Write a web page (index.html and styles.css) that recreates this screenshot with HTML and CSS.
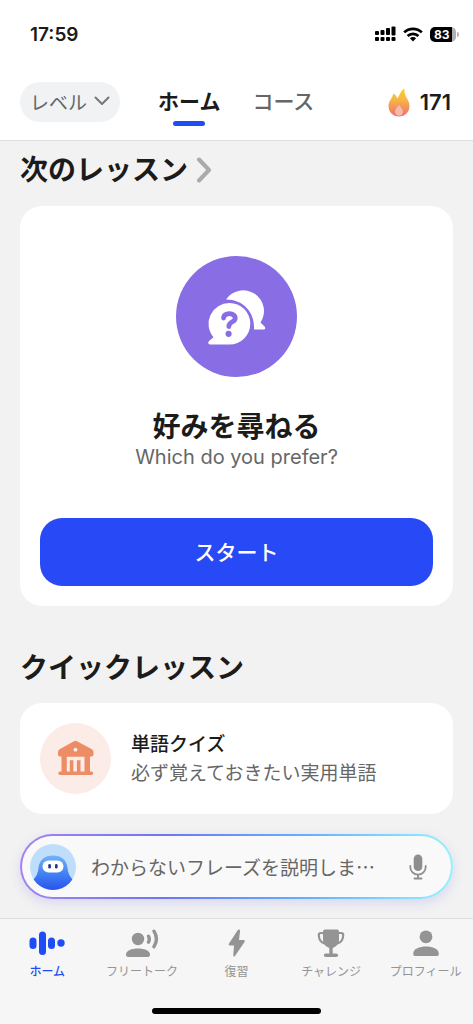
FILE: index.html
```html
<!DOCTYPE html>
<html lang="ja">
<head>
<meta charset="utf-8">
<meta name="viewport" content="width=device-width, initial-scale=1">
<title>ホーム</title>
<link rel="stylesheet" href="styles.css">
</head>
<body>
<div class="app">
  <header class="header">
    <div class="status">
      <span class="time">17:59</span>
      <div class="status-icons">
        <svg width="21" height="16" viewBox="0 0 21 16" aria-hidden="true">
          <g fill="#000">
            <rect x="0" y="5" width="4" height="4" rx="1"/><rect x="5.5" y="4" width="4" height="5" rx="1"/><rect x="11" y="2" width="4" height="7" rx="1"/><rect x="16.5" y="0.5" width="4" height="9" rx="1"/>
            <rect x="0" y="11" width="4" height="4" rx="1"/><rect x="5.5" y="11" width="4" height="4" rx="1"/><rect x="11" y="11" width="4" height="4" rx="1"/><rect x="16.5" y="11" width="4" height="4" rx="1"/>
          </g>
        </svg>
        <svg width="20" height="15" viewBox="0 0 20 15" aria-hidden="true">
          <g fill="none" stroke="#000" stroke-width="2.7">
            <path d="M1.2 5.4a12.5 12.5 0 0 1 17.6 0"/><path d="M4.6 9a7.7 7.7 0 0 1 10.8 0"/>
          </g>
          <path d="M10 14.4 6.9 11.3a4.4 4.4 0 0 1 6.2 0z" fill="#000"/>
        </svg>
        <span class="battery"><span class="battery-level">83</span></span>
      </div>
    </div>
    <div class="topbar">
      <button class="level" type="button">レベル
        <svg width="16" height="10" viewBox="0 0 16 10" aria-hidden="true"><path d="M1.5 1.5 8 8l6.500-6.500" fill="none" stroke="#777" stroke-width="2" stroke-linecap="round" stroke-linejoin="round"/></svg>
      </button>
      <nav class="tabs">
        <a class="tab tab-active" href="#home">ホーム</a>
        <a class="tab" href="#course">コース</a>
      </nav>
      <div class="streak">
        <svg width="22" height="29" viewBox="0 0 22 29" aria-hidden="true">
          <defs><linearGradient id="flame" x1="0" y1="0" x2="0" y2="1"><stop offset="0" stop-color="#fbd02e"/><stop offset=".4" stop-color="#f7b545"/><stop offset="1" stop-color="#ef6f73"/></linearGradient></defs>
          <path d="M16.400.6C16.300 4.500 17 7 19 10.500c1.500 2.600 2.500 4.700 2.500 7.500C21.500 24.300 17 28.500 11 28.500S.5 24.300.5 18c0-5.800 4.200-7.600 4.700-12.600 2.200 1 3.600 2.700 3.900 5C11.600 8.500 12 3 16.400.6z" fill="url(#flame)"/>
          <path d="M11 16.500c1 2.500 4 4.200 4 7.200 0 2.400-1.800 4-4 4s-4-1.600-4-4c0-3 3-4.700 4-7.200z" fill="#f6b9ae"/>
        </svg>
        <span>171</span>
      </div>
    </div>
  </header>

  <main class="content">
    <h2 class="heading"><a class="heading-link" href="#next">次のレッスン
      <svg width="16" height="26" viewBox="0 0 16 26" aria-hidden="true"><path d="M3 2.500 13 13 3 23.500" fill="none" stroke="#aaa" stroke-width="4" stroke-linecap="round" stroke-linejoin="round"/></svg></a></h2>

    <section class="card lesson">
      <svg class="lesson-icon" viewBox="0 0 121 121" aria-hidden="true">
        <circle cx="60.500" cy="60.500" r="60.500" fill="#886de5"/>
        <path d="M50 43.500A20.500 20.500 0 1 1 84.500 66.500L88.500 70.500q2 3-1 3H78C79 57 68 43.500 50 43.500z" fill="#fff"/>
        <path d="M53.500 47a20.800 20.800 0 0 1 0 41.600H34q-3-.5-1-3.500l4.500-3.800A20.800 20.800 0 0 1 53.500 47z" fill="#fff"/>
        <path d="M47.600 62A5.800 4.300 0 1 1 56.500 65.600Q53 67.500 52.800 70.500" fill="none" stroke="#886de5" stroke-width="4.800" stroke-linecap="round"/>
        <circle cx="52.600" cy="77.800" r="3.100" fill="#886de5"/>
      </svg>
      <h3 class="lesson-title">好みを尋ねる</h3>
      <p class="lesson-sub">Which do you prefer?</p>
      <button class="start" type="button">スタート</button>
    </section>

    <h2 class="heading">クイックレッスン</h2>

    <a class="card quick" href="#quiz">
      <svg class="quick-icon" viewBox="0 0 71 71" aria-hidden="true">
        <circle cx="35.500" cy="35.500" r="35.500" fill="#fbece7"/>
        <path fill-rule="evenodd" d="M34 18.200q1.500-.8 3 0L51.500 26q2 1.200 2 3v2.500q0 2-2 2H50V48.500h1.500a1.700 1.700 0 0 1 0 3.400H20a1.700 1.700 0 0 1 0-3.400h1.500V33.500H20q-2 0-2-2V29q0-1.800 2-3zM26.800 33.800V48.500h3V37.200h3.600V48.500h3.500V37.200h3.600V48.500h4V33.800zM35.500 24.800a1.900 1.900 0 1 0 .01 0z" fill="#ee8c66"/>
      </svg>
      <span class="quick-text">
        <span class="quick-title">単語クイズ</span>
        <span class="quick-sub">必ず覚えておきたい実用単語</span>
      </span>
    </a>
  </main>

  <footer class="footer">
    <form class="ask">
      <svg class="avatar" viewBox="0 0 46 46" aria-hidden="true">
        <defs>
          <linearGradient id="body" x1="0" y1="0" x2="0" y2="1"><stop offset="0" stop-color="#75b1f8"/><stop offset=".5" stop-color="#4584f4"/><stop offset="1" stop-color="#2753ed"/></linearGradient>
          <clipPath id="round"><circle cx="23" cy="23" r="23"/></clipPath>
        </defs>
        <g clip-path="url(#round)">
          <rect width="46" height="46" fill="#bedefb"/>
          <path d="M3 36q5-5 5.500-12C9 16 15 11.500 23 11.500S37 16 37.500 24q.5 7 5.500 12v10H3z" fill="url(#body)"/>
        </g>
        <rect x="12.500" y="16.500" width="21" height="12" rx="6" fill="#fff"/>
        <rect x="18.300" y="20" width="2.600" height="4.500" rx="1.300" fill="#173795"/><rect x="25" y="20" width="2.600" height="4.500" rx="1.300" fill="#173795"/>
      </svg>
      <input class="ask-input" type="text" aria-label="質問" placeholder="わからないフレーズを説明しま…">
      <button class="mic" type="button" aria-label="音声入力">
        <svg width="18" height="26" viewBox="0 0 18 26" aria-hidden="true">
          <rect x="4.700" y="0.500" width="8.600" height="16.500" rx="4.300" fill="#8e8e8e"/>
          <path d="M1.300 12v1a7.700 7.700 0 0 0 15.400 0v-1M9 21v3.500M5.500 24.500h7" fill="none" stroke="#8e8e8e" stroke-width="1.800" stroke-linecap="round"/>
        </svg>
      </button>
    </form>
    <nav class="nav">
      <a class="nav-item nav-active" href="#home">
        <svg width="36" height="30" viewBox="0 0 36 30" fill="currentColor" aria-hidden="true"><rect x="0.500" y="9.500" width="7" height="11.500" rx="3.500"/><rect x="10" y="3.500" width="7" height="23.500" rx="3.500"/><rect x="19" y="9.500" width="7" height="11.500" rx="3.500"/><circle cx="32" cy="15" r="3.700"/></svg>
        <span>ホーム</span></a>
      <a class="nav-item" href="#talk">
        <svg width="34" height="30" viewBox="0 0 34 30" fill="currentColor" aria-hidden="true"><circle cx="13" cy="11" r="6.200"/><path d="M1 26.500C1 18.500 25 18.500 25 26.500q0 2.500-2.500 2.500h-19Q1 29 1 26.500z"/><path d="M23.500 8.300q1.600 2.900 0 5.800M29 3.200q4.800 7.900 0 15.500" fill="none" stroke="currentColor" stroke-width="3.400" stroke-linecap="round"/></svg>
        <span>フリートーク</span></a>
      <a class="nav-item" href="#review">
        <svg width="20" height="30" viewBox="0 0 20 30" fill="currentColor" aria-hidden="true"><path d="M12 1.800Q14.400.6 14 3.500L13 12h4.500q2 .2 1 2L9 28q-1.800 1.500-1.700-1L8 17.500H4q-2-.2-1-2z"/></svg>
        <span>復習</span></a>
      <a class="nav-item" href="#challenge">
        <svg width="28" height="30" viewBox="0 0 28 30" fill="currentColor" aria-hidden="true"><path d="M7.500 1.500h13Q22 1.500 22 4v8q0 5.500-6.300 8v5.500H19q2.200 0 2.200 1.700T19 29H9q-2.200 0-2.200-1.800T9 25.500h3.300V20Q6 17.500 6 12V4q0-2.500 1.500-2.500z"/><path d="M6.500 5H3.800Q1.800 5 1.800 7c0 5 2.500 7.500 5.700 8.500M21.500 5h2.700q2 0 2 2c0 5-2.500 7.500-5.700 8.500" fill="none" stroke="currentColor" stroke-width="2.200"/></svg>
        <span>チャレンジ</span></a>
      <a class="nav-item" href="#profile">
        <svg width="28" height="30" viewBox="0 0 28 30" fill="currentColor" aria-hidden="true"><circle cx="14" cy="8.800" r="6.400"/><path d="M1.200 25.500C1.200 16 26.800 16 26.800 25.500q0 2.500-1.500 2.500H2.700q-1.500 0-1.500-2.500z"/></svg>
        <span>プロフィール</span></a>
    </nav>
    <div class="home-indicator"></div>
  </footer>
</div>
</body>
</html>
```
FILE: styles.css
```css
* { box-sizing: border-box; }

body {
  margin: 0;
  background: #f2f2f2;
  color: #1b1b1b;
  font-family: Inter, "Noto Sans CJK JP", sans-serif;
}

h2, h3, p { margin: 0; }
a { color: inherit; text-decoration: none; }
button, input { font: inherit; border: 0; padding: 0; background: none; }
svg { display: block; flex: none; }

.app {
  display: flex;
  flex-direction: column;
  min-height: 100vh;
}

.header {
  background: #fff;
  border-bottom: 1px solid #dedede;
}

.status {
  display: flex;
  align-items: center;
  justify-content: space-between;
  height: 68px;
  padding: 0 14px 0 30px;
}

.time { font-size: 19px; font-weight: 600; }

.status-icons { display: flex; align-items: center; gap: 7px; }

.battery {
  display: flex;
  align-items: center;
}

.battery-level {
  width: 26px;
  border-radius: 5px;
  background: linear-gradient(to right, #000 84%, #b0b0b0 84%);
  color: #fff;
  font-size: 12px;
  font-weight: 700;
  line-height: 15px;
  padding-left: 4px;
}

.battery::after {
  content: "";
  width: 2px;
  height: 5px;
  margin-left: 1px;
  border-radius: 0 2px 2px 0;
  background: #b0b0b0;
}

.topbar {
  display: flex;
  align-items: center;
  height: 72px;
  padding: 0 20px 4px;
}

.level {
  display: flex;
  align-items: center;
  gap: 7px;
  height: 40px;
  padding: 0 10px 2px;
  border-radius: 20px;
  background: #f1f2f4;
  color: #666;
  font-size: 19px;
}

.tabs {
  display: flex;
  gap: 32px;
  margin-left: 38px;
}

.tab {
  position: relative;
  color: #666;
  font-size: 21px;
  font-weight: 500;
  line-height: 40px;
}

.tab-active { color: #1b1b1b; font-weight: 700; }

.tab-active::after {
  content: "";
  position: absolute;
  left: 50%;
  bottom: -4px;
  width: 32px;
  height: 5px;
  margin-left: -16px;
  border-radius: 3px;
  background: #1f4df5;
}

.streak {
  display: flex;
  align-items: center;
  gap: 10px;
  margin-left: auto;
  padding-right: 2px;
  font-size: 22px;
  font-weight: 600;
}

.content {
  flex: 1;
  padding: 9px 20px 20px;
}

.heading {
  font-size: 28px;
  font-weight: 700;
  line-height: 40px;
}

.heading-link { display: flex; align-items: center; gap: 8px; }

.card {
  border-radius: 22px;
  background: #fff;
}

.lesson {
  display: flex;
  flex-direction: column;
  align-items: center;
  margin: 16px 0 42px;
  padding: 50px 20px 20px;
}

.lesson-icon { width: 121px; height: 121px; }

.lesson-title {
  margin-top: 30px;
  font-size: 28px;
  font-weight: 700;
  line-height: 40px;
}

.lesson-sub {
  color: #666;
  font-size: 20px;
  line-height: 20px;
}

.start {
  align-self: stretch;
  height: 68px;
  margin-top: 51px;
  padding-bottom: 2px;
  border-radius: 22px;
  background: #2849f6;
  color: #fff;
  font-size: 21px;
  font-weight: 500;
}

.quick {
  display: flex;
  align-items: center;
  gap: 20px;
  margin-top: 15px;
  padding: 20px;
}

.quick-icon { width: 71px; height: 71px; }

.quick-text {
  display: flex;
  flex-direction: column;
  font-size: 19px;
  line-height: 29px;
}

.quick-title { font-weight: 500; }
.quick-sub { color: #666; }

.footer {
  position: sticky;
  bottom: 0;
}

.ask {
  display: flex;
  align-items: center;
  height: 65px;
  margin: 0 20px 19px;
  padding: 0 22px 0 8px;
  border: 2px solid transparent;
  border-radius: 33px;
  background:
    linear-gradient(#f9f9f9, #f9f9f9) padding-box,
    linear-gradient(to right, #a384ee, #6f76ee 33%, #65b0fb 66%, #93f2ff) border-box;
  box-shadow: 0 4px 12px rgba(110, 110, 240, 0.2);
}

.avatar { width: 46px; height: 46px; }

.ask-input {
  flex: 1;
  min-width: 0;
  height: 40px;
  margin: 0 15px;
  outline: 0;
  color: #1b1b1b;
  font-family: "Noto Sans CJK JP", sans-serif;
  font-size: 19px;
  text-overflow: ellipsis;
}

.ask-input::placeholder { color: #666; opacity: 1; }

.mic { padding: 2px; }

.nav {
  display: grid;
  grid-template-columns: repeat(5, 1fr);
  padding-top: 9px;
  border-top: 1px solid #dedede;
  background: #f6f6f6;
}

.nav-item {
  display: flex;
  flex-direction: column;
  align-items: center;
  gap: 5px;
  color: #949494;
  font-size: 12px;
  line-height: 18px;
  white-space: nowrap;
}

.nav-active { color: #1f4df5; font-weight: 500; }

.home-indicator {
  padding: 27px 0 10px;
  background: #f6f6f6;
}

.home-indicator::before {
  content: "";
  display: block;
  width: 169px;
  height: 6px;
  margin: 0 auto;
  border-radius: 3px;
  background: #000;
}
```
